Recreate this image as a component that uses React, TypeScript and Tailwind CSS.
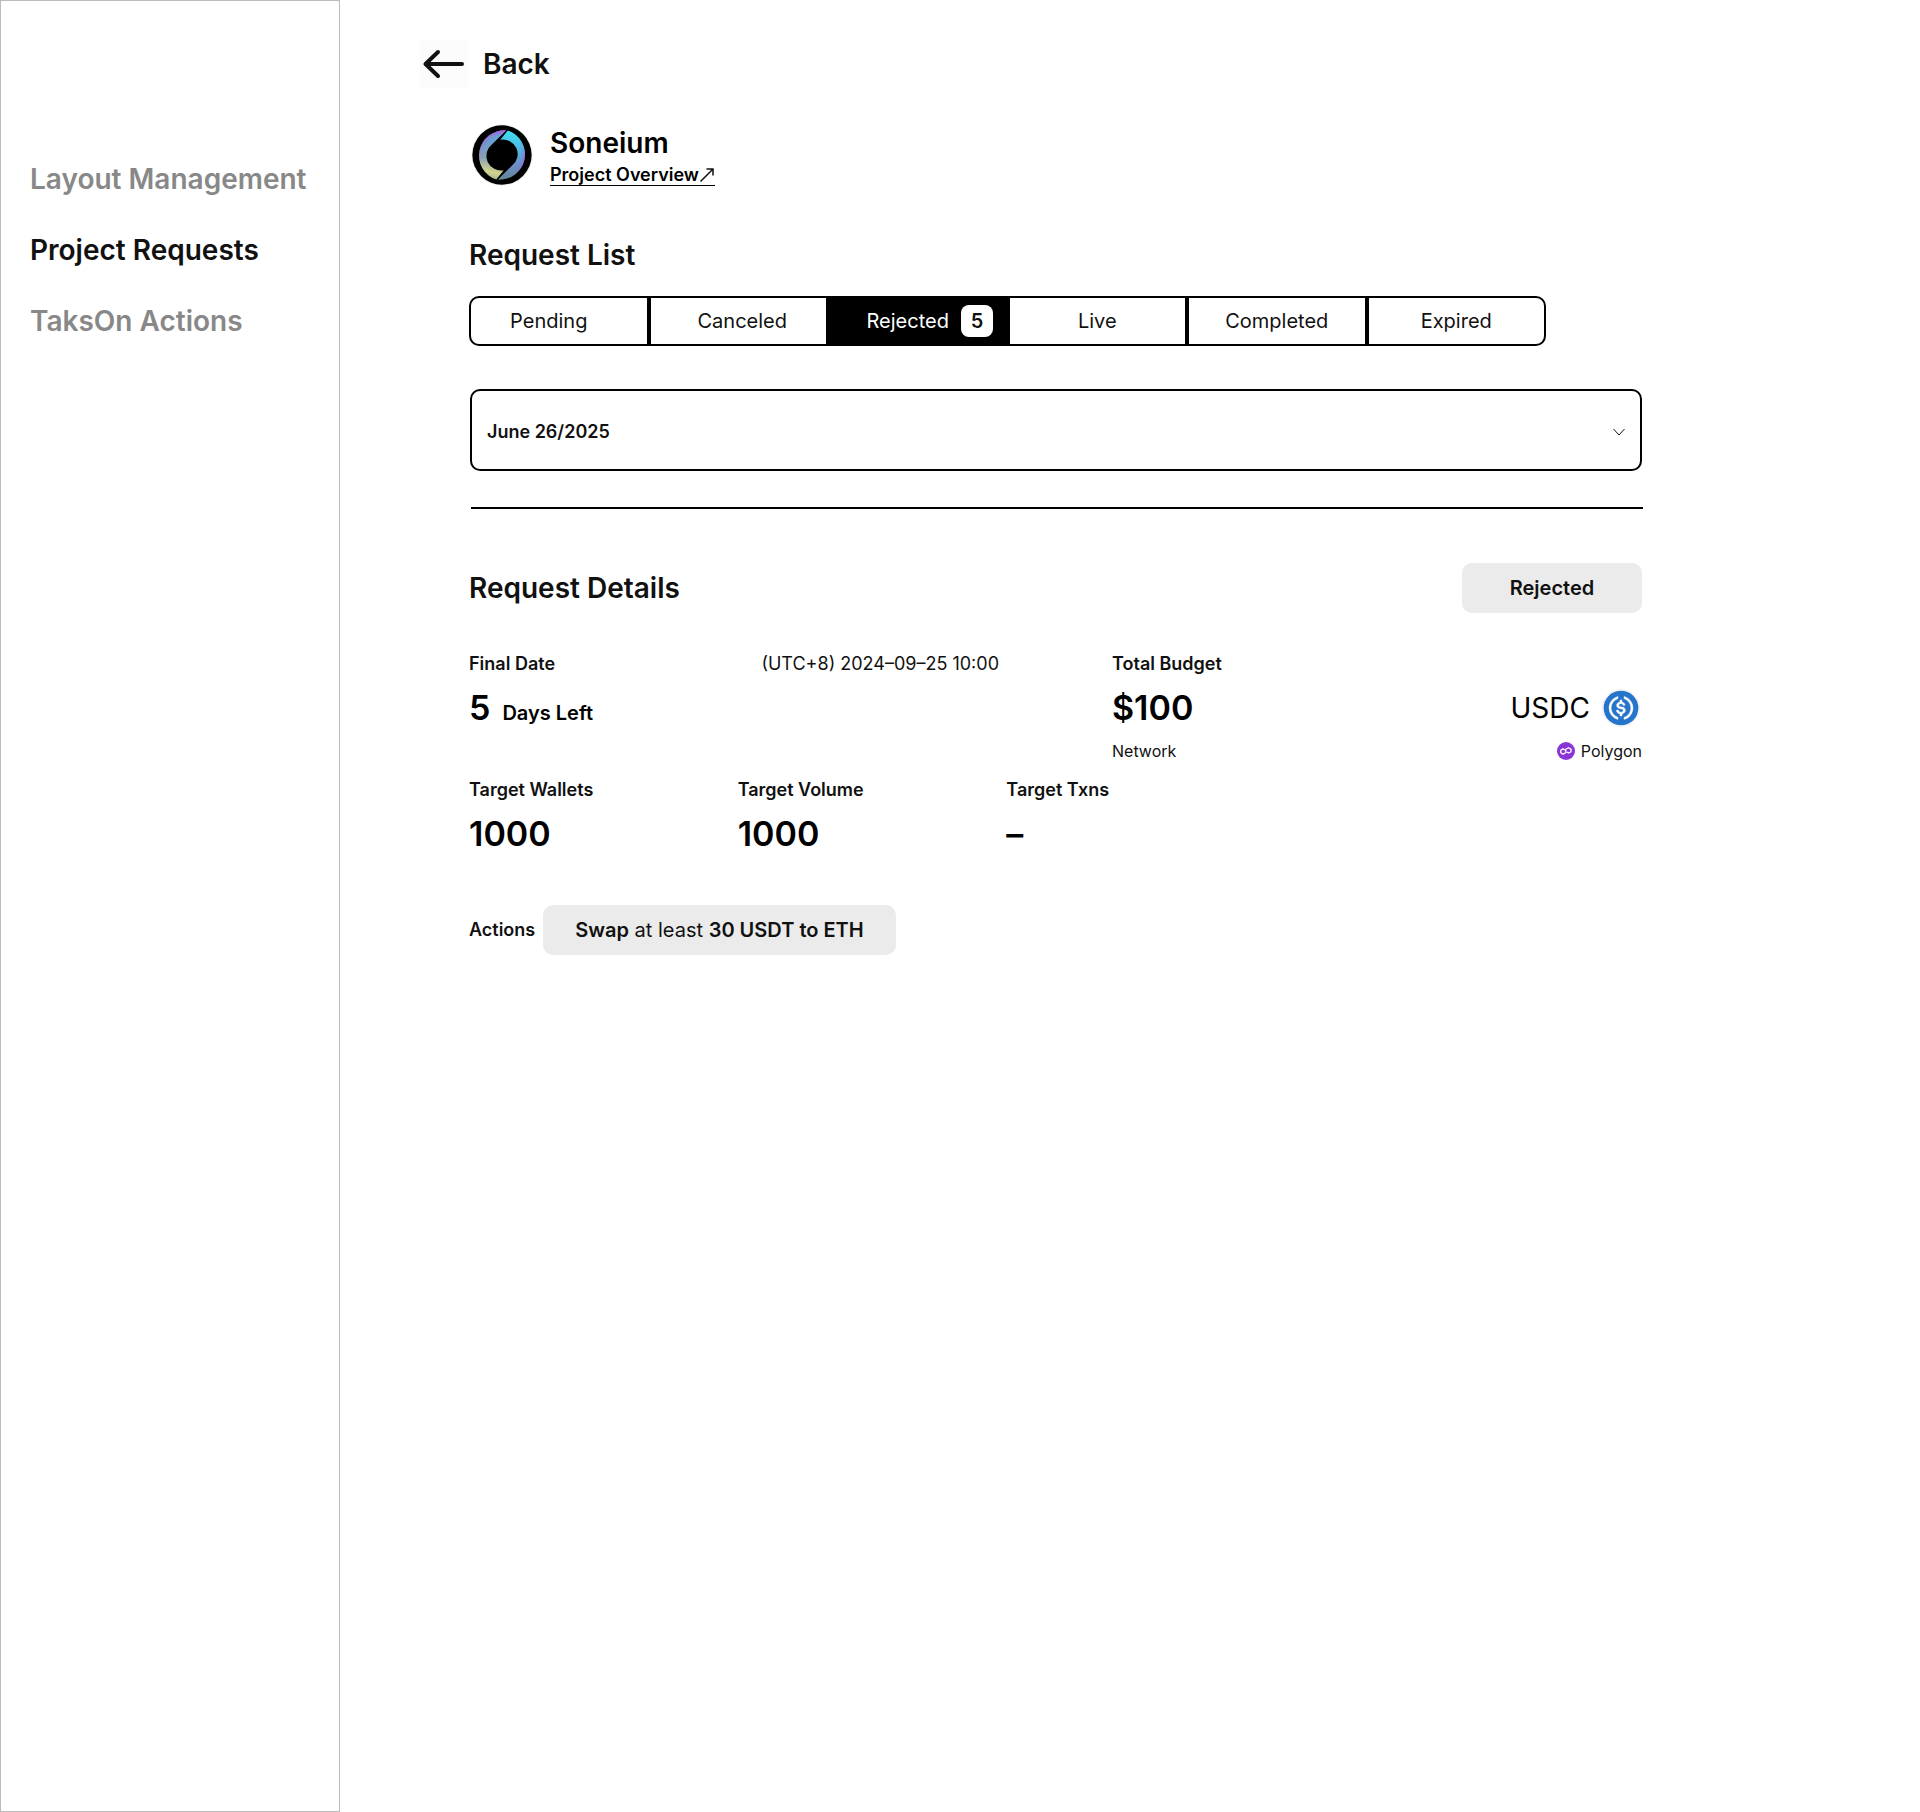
import React from "react";

function BackArrow() {
  return (
    <svg viewBox="0 0 48 48" className="size-12 bg-[#fcfcfc]" fill="none" stroke="#111" strokeWidth="4" strokeLinecap="round" strokeLinejoin="round" aria-hidden="true">
      <path d="M42 24H6M18 12L5.500 24L18 36" />
    </svg>
  );
}

function SoneiumLogo() {
  return (
    <svg viewBox="-92 -92 184 184" className="size-[62px]" aria-hidden="true">
      <defs>
        <linearGradient id="left-swirl" x1="0" y1="-75" x2="-30" y2="75" gradientUnits="userSpaceOnUse">
          <stop offset="0" stopColor="#58b4e0" />
          <stop offset="0.3" stopColor="#6c9ccc" />
          <stop offset="0.6" stopColor="#86a2b4" />
          <stop offset="0.85" stopColor="#d4d48c" />
          <stop offset="1" stopColor="#9aae96" />
        </linearGradient>
        <linearGradient id="right-swirl" x1="10" y1="-75" x2="10" y2="75" gradientUnits="userSpaceOnUse">
          <stop offset="0" stopColor="#3fe0f0" />
          <stop offset="0.4" stopColor="#50b8e4" />
          <stop offset="0.7" stopColor="#6d8ec8" />
          <stop offset="1" stopColor="#5f8790" />
        </linearGradient>
        <radialGradient id="rim" cx="0" cy="0" r="75" gradientUnits="userSpaceOnUse">
          <stop offset="0.75" stopColor="#c040d8" stopOpacity="0" />
          <stop offset="1" stopColor="#d048dc" stopOpacity="0.9" />
        </radialGradient>
        <linearGradient id="rim-fade-left" x1="0" y1="-75" x2="0" y2="40" gradientUnits="userSpaceOnUse">
          <stop offset="0.1" stopColor="#fff" />
          <stop offset="0.9" stopColor="#000" />
        </linearGradient>
        <linearGradient id="rim-fade-right" x1="0" y1="-50" x2="0" y2="60" gradientUnits="userSpaceOnUse">
          <stop offset="0.1" stopColor="#000" />
          <stop offset="0.5" stopColor="#fff" />
          <stop offset="1" stopColor="#000" />
        </linearGradient>
        <mask id="mask-left" maskUnits="userSpaceOnUse" x="-92" y="-92" width="184" height="184">
          <rect x="-92" y="-92" width="184" height="184" fill="url(#rim-fade-left)" />
        </mask>
        <mask id="mask-right" maskUnits="userSpaceOnUse" x="-92" y="-92" width="184" height="184">
          <rect x="-92" y="-92" width="184" height="184" fill="url(#rim-fade-right)" />
        </mask>
      </defs>
      <circle r="91" fill="#f1f1f1" />
      <circle r="88" fill="#000" />
      <path d="M12-73L-30-31A43 43 0 0 0 5 45L-17 73A75 75 0 0 1 12-73Z" fill="url(#left-swirl)" />
      <path d="M12-73L-30-31A43 43 0 0 0 5 45L-17 73A75 75 0 0 1 12-73Z" fill="url(#rim)" mask="url(#mask-left)" />
      <path d="M-12 73L30 31A43 43 0 0 0-5-45L17-73A75 75 0 0 1-12 73Z" fill="url(#right-swirl)" />
      <path d="M-12 73L30 31A43 43 0 0 0-5-45L17-73A75 75 0 0 1-12 73Z" fill="url(#rim)" mask="url(#mask-right)" />
    </svg>
  );
}

function UsdcLogo() {
  return (
    <svg viewBox="-1.500 -1.500 35 35" className="size-[38px]" aria-hidden="true">
      <circle cx="16" cy="16" r="17" fill="#fff" stroke="#ececec" strokeWidth="0.8" />
      <circle cx="16" cy="16" r="16" fill="#2775ca" />
      <g fill="#fff" stroke="#fff" strokeWidth="0.5">
        <path d="M20.022 18.124c0-2.124-1.280-2.852-3.840-3.156-1.828-.243-2.193-.728-2.193-1.578 0-.85.61-1.396 1.828-1.396 1.097 0 1.707.364 2.011 1.275a.458.458 0 00.427.303h.975a.416.416 0 00.427-.425v-.06a3.040 3.040 0 00-2.743-2.489V9.142c0-.243-.183-.425-.487-.486h-.915c-.243 0-.426.182-.487.486v1.396c-1.829.242-2.986 1.456-2.986 2.974 0 2.002 1.218 2.791 3.778 3.095 1.707.303 2.255.668 2.255 1.639 0 .97-.853 1.638-2.011 1.638-1.585 0-2.133-.667-2.316-1.578-.06-.242-.244-.364-.427-.364h-1.036a.416.416 0 00-.426.425v.06c.243 1.518 1.219 2.610 3.230 2.914v1.457c0 .242.183.425.487.485h.915c.243 0 .426-.182.487-.485V21.340c1.829-.303 3.047-1.578 3.047-3.217z" />
        <path d="M12.892 24.497c-4.754-1.700-7.192-6.980-5.424-11.653.914-2.550 2.925-4.491 5.424-5.402.244-.121.365-.303.365-.607v-.85c0-.242-.121-.424-.365-.485-.061 0-.183 0-.244.06a10.895 10.895 0 00-7.130 13.717c1.096 3.400 3.717 6.010 7.130 7.102.244.121.488 0 .548-.243.061-.06.061-.122.061-.243v-.85c0-.182-.182-.424-.365-.546zm6.460-18.936c-.244-.122-.488 0-.548.242-.061.061-.061.122-.061.243v.85c0 .243.182.485.365.607 4.754 1.700 7.192 6.980 5.424 11.653-.914 2.550-2.925 4.491-5.424 5.402-.244.121-.365.303-.365.607v.85c0 .242.121.424.365.485.061 0 .183 0 .244-.06a10.895 10.895 0 007.130-13.717c-1.096-3.460-3.778-6.070-7.130-7.162z" />
      </g>
    </svg>
  );
}

function PolygonLogo() {
  return (
    <svg viewBox="0 0 36 36" className="size-[18px]" aria-hidden="true">
      <circle cx="18" cy="18" r="18" fill="#8a35d6" />
      <path d="M15 15.500L12 13.800L7.500 16.500V21.500L12 24.200L17.500 21.500V14.500L23 11.500L28 14.200V19.500L23.500 22L20.500 20.400" fill="none" stroke="#fff" strokeWidth="2.600" strokeLinejoin="round" strokeLinecap="round" />
    </svg>
  );
}

const navItems = [
  { label: "Layout Management", active: false },
  { label: "Project Requests", active: true },
  { label: "TaksOn Actions", active: false },
];

const tabs = [
  { label: "Pending", pad: "pr-5" },
  { label: "Canceled", pad: "pl-2" },
  { label: "Rejected", count: 5, pad: "pl-6" },
  { label: "Live", pad: "" },
  { label: "Completed", pad: "" },
  { label: "Expired", pad: "" },
];

const targets = [
  { label: "Target Wallets", value: "1000" },
  { label: "Target Volume", value: "1000" },
  { label: "Target Txns", value: "–" },
];

export default function App() {
  return (
    <div className="flex min-h-screen bg-white font-['Inter',sans-serif] text-[#111]">
      <aside className="w-[340px] shrink-0 border border-[#bbb] px-[29px] pt-40">
        <nav className="flex flex-col gap-[35px]">
          {navItems.map((item) => (
            <a
              key={item.label}
              href="#"
              aria-current={item.active ? "page" : undefined}
              className={`whitespace-nowrap text-[28px] leading-9 font-semibold ${item.active ? "text-[#111]" : "text-[#888]"}`}
            >
              {item.label}
            </a>
          ))}
        </nav>
      </aside>

      <main className="min-w-0 grow pt-10 pl-20 pr-10">
        <button type="button" className="flex items-center gap-[15px] text-[28px] leading-9 font-semibold">
          <BackArrow />
          Back
        </button>

        <div className="ml-[49px] max-w-[1174px]">
          <header className="mt-9 flex items-center gap-[17px]">
            <div className="ml-0.5">
              <SoneiumLogo />
            </div>
            <div className="flex flex-col items-start text-black">
              <h1 className="text-[28px] leading-9 font-semibold">Soneium</h1>
              <a href="#" className="mt-1 flex items-center border-b border-black text-lg leading-5 font-semibold">
                Project Overview
                <svg viewBox="0 0 16 16" className="size-4" fill="none" stroke="#111" strokeWidth="1.500" aria-hidden="true">
                  <path d="M1.500 14.500L14 2M7.500 2H14V8.500" />
                </svg>
              </a>
            </div>
          </header>

          <h2 className="mt-[51px] text-[28px] leading-9 font-semibold">Request List</h2>
          <div role="tablist" aria-label="Request status" className="mt-[23px] grid h-[50px] max-w-[1077px] grid-cols-6">
            {tabs.map((tab) => (
              <button
                key={tab.label}
                type="button"
                role="tab"
                aria-selected={tab.count !== undefined}
                className={`flex items-center justify-center gap-3 border-2 border-black text-xl first:rounded-l-[10px] last:rounded-r-[10px] ${tab.pad} ${tab.count !== undefined ? "bg-black text-white" : "bg-white"}`}
              >
                {tab.label}
                {tab.count !== undefined && (
                  <span className="flex size-8 items-center justify-center rounded-lg bg-white font-semibold text-[#111]">{tab.count}</span>
                )}
              </button>
            ))}
          </div>

          <div className="relative mt-[43px] ml-px mr-px">
            <select aria-label="Request date" className="h-[82px] w-full appearance-none rounded-[10px] border-2 border-black bg-white px-[15px] pt-1 text-lg font-semibold">
              <option>June 26/2025</option>
            </select>
            <svg viewBox="0 0 12 8" className="pointer-events-none absolute top-[39px] right-[17px] h-2 w-3" fill="none" stroke="#111" aria-hidden="true">
              <path d="M0.500 1L6 7L11.500 1" />
            </svg>
          </div>
          <hr className="mt-9 ml-0.5 border-t-2 border-black" />

          <div className="mt-[54px] mr-px flex items-center justify-between">
            <h2 className="text-[28px] leading-9 font-semibold">Request Details</h2>
            <div className="flex h-[50px] w-[180px] items-center justify-center rounded-[10px] bg-[#ebebeb] text-xl font-semibold">Rejected</div>
          </div>

          <div className="mt-[39px] mr-px grid grid-cols-2 gap-x-[113px]">
            <section>
              <div className="flex justify-between text-lg leading-6">
                <h3 className="font-semibold">Final Date</h3>
                <time>(UTC+8) 2024–09–25 10:00</time>
              </div>
              <p className="mt-3 flex items-baseline gap-3 text-black">
                <span className="text-[34px] leading-10 font-semibold">5</span>
                <span className="text-xl font-semibold">Days Left</span>
              </p>
            </section>
            <section>
              <h3 className="text-lg leading-6 font-semibold">Total Budget</h3>
              <div className="mt-3 flex items-center justify-between text-black">
                <span className="text-[34px] leading-10 font-semibold">$100</span>
                <span className="mr-0.5 flex items-center gap-3 text-[28px] leading-9">
                  USDC
                  <UsdcLogo />
                </span>
              </div>
              <div className="mt-[11px] flex items-center justify-between text-base leading-6">
                <span>Network</span>
                <span className="flex items-center gap-1.5">
                  <PolygonLogo />
                  Polygon
                </span>
              </div>
            </section>
          </div>

          <dl className="mt-[15px] grid max-w-[806px] grid-cols-3">
            {targets.map((target) => (
              <div key={target.label}>
                <dt className="text-lg leading-6 font-semibold">{target.label}</dt>
                <dd className="mt-3 text-[34px] leading-10 font-semibold text-black">{target.value}</dd>
              </div>
            ))}
          </dl>

          <div className="mt-[51px] flex items-center gap-2">
            <h3 className="text-lg leading-6 font-semibold">Actions</h3>
            <p className="flex h-[50px] items-center rounded-[10px] bg-[#ebebeb] px-8 text-xl whitespace-pre">
              <b className="font-semibold">Swap</b> at least <b className="font-semibold">30 USDT to ETH</b>
            </p>
          </div>
        </div>
      </main>
    </div>
  );
}
